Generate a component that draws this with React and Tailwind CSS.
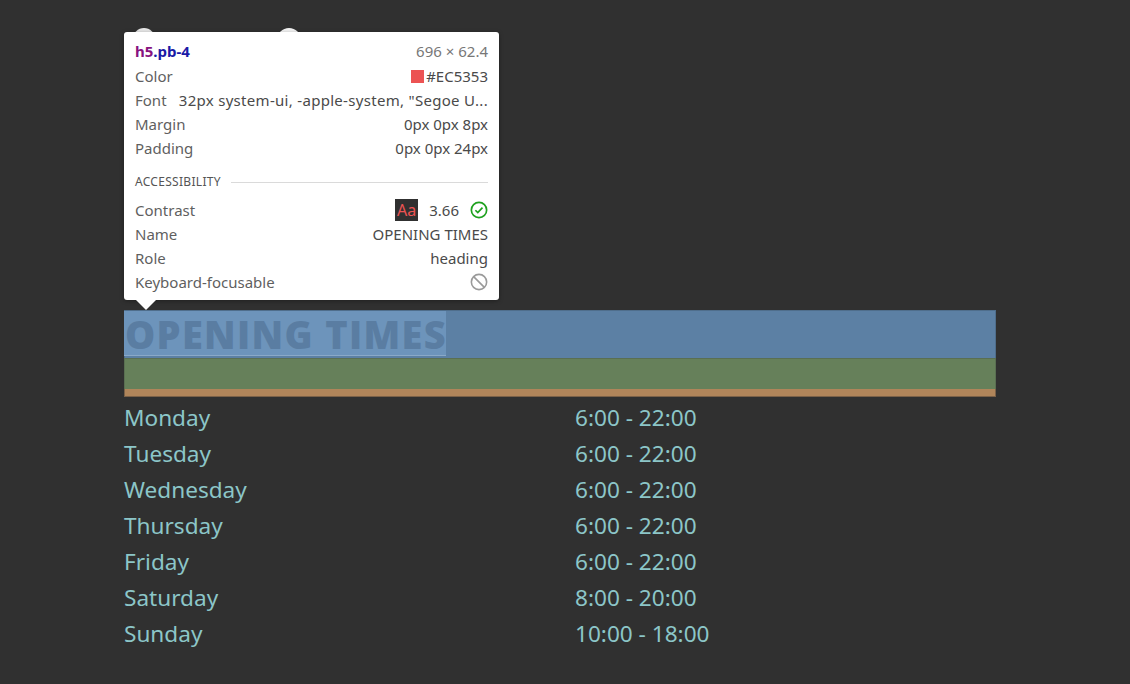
import React from 'react';

const hours = [
  ['Monday', '6:00 - 22:00'],
  ['Tuesday', '6:00 - 22:00'],
  ['Wednesday', '6:00 - 22:00'],
  ['Thursday', '6:00 - 22:00'],
  ['Friday', '6:00 - 22:00'],
  ['Saturday', '8:00 - 20:00'],
  ['Sunday', '10:00 - 18:00'],
];

function Row({ label, children, className = '' }) {
  return (
    <div className={`flex items-center justify-between h-[24px] ${className}`}>
      <span className="text-[#5f5f5f]">{label}</span>
      <span className="text-[#4a4a4a] flex items-center gap-2">{children}</span>
    </div>
  );
}

export default function App() {
  return (
    <div className="relative w-[1130px] h-[684px] overflow-hidden bg-[#303030] font-['Noto_Sans','Open_Sans',sans-serif]">
      {/* peeking avatars behind the tooltip */}
      <div className="absolute left-[133px] top-[28px] w-[22px] h-[22px] rounded-full bg-[#e8e8e8]" />
      <div className="absolute left-[277px] top-[28px] w-[24px] h-[24px] rounded-full bg-[#f4f4f4]" />

      {/* page content */}
      <div className="pt-[310px] pl-[124px]">
        <div className="w-[872px]">
          <div className="relative h-[48px] bg-[#5c80a4] border-x border-t border-[#4f6e8c]">
            <div className="absolute left-[-1px] top-0 h-[45px] w-[322px] bg-[#6d94bb] border-b border-[#8aa9c8]" />
            <h5 className="relative leading-[47px] text-[38px] font-extrabold tracking-[1.3px] text-[#5a7da2] font-['Open_Sans',sans-serif] whitespace-nowrap">
              OPENING TIMES
            </h5>
          </div>
          <div className="h-[31px] bg-[#66805a] border-x border-t border-[#5a6f52]" />
          <div className="h-[8px] bg-[#b0855a] border-x border-b border-[#7b6148]" />
        </div>

        <div className="mt-[3px] w-[872px] text-[22.6px] leading-[36px] text-[#8cc6c8]">
          {hours.map(([day, time]) => (
            <div key={day} className="grid grid-cols-[451px_1fr]">
              <span>{day}</span>
              <span>{time}</span>
            </div>
          ))}
        </div>
      </div>

      {/* devtools inspect tooltip */}
      <div className="absolute left-[124px] top-[32px] w-[375px] h-[268px] bg-white rounded-[3px] shadow-[0_1px_4px_rgba(0,0,0,0.35)] px-[11px] pt-[6px] text-[15px]">
        <div className="flex items-center justify-between h-[26px]">
          <span className="font-bold">
            <span className="text-[#881280]">h5</span>
            <span className="text-[#1a1aa6]">.pb-4</span>
          </span>
          <span className="text-[#777]">696 × 62.4</span>
        </div>
        <Row label="Color">
          <span className="flex items-center gap-[2px]">
            <span className="inline-block w-[13px] h-[13px] bg-[#ec5353]" />
            #EC5353
          </span>
        </Row>
        <Row label="Font">
          <span className="ml-[-200px] whitespace-nowrap tracking-[0.3px]">32px system-ui, -apple-system, "Segoe U...</span>
        </Row>
        <Row label="Margin">0px 0px 8px</Row>
        <Row label="Padding">0px 0px 24px</Row>

        <div className="flex items-center gap-[10px] mt-[10px] h-[24px]">
          <span className="text-[12px] text-[#555] tracking-[0.3px]">ACCESSIBILITY</span>
          <div className="flex-1 h-px bg-[#dadada]" />
        </div>
        <Row label="Contrast" className="mt-[4px]">
          <span className="flex items-center gap-[11px]">
            <span className="bg-[#303030] text-[#ec5353] px-[2px] h-[22px] leading-[22px] text-[16px]">Aa</span>
            <span>3.66</span>
            <svg width="18" height="18" viewBox="0 0 16 16" fill="none" stroke="#1ea11e" strokeWidth="1.5">
              <circle cx="8" cy="8" r="6.8" />
              <path d="M4.8 8.2l2.1 2.1 4.2-4.4" />
            </svg>
          </span>
        </Row>
        <Row label="Name" className="h-[23.5px]">OPENING TIMES</Row>
        <Row label="Role" className="h-[23.5px]">heading</Row>
        <Row label="Keyboard-focusable" className="h-[23.5px]">
          <svg width="18" height="18" viewBox="0 0 16 16" fill="none" stroke="#9a9a9a" strokeWidth="1.4">
            <circle cx="8" cy="8" r="6.8" />
            <path d="M3.2 3.2l9.6 9.6" />
          </svg>
        </Row>
      </div>
      {/* tooltip arrow */}
      <div className="absolute left-[135px] top-[299px] w-0 h-0 border-l-[11px] border-r-[11px] border-t-[11px] border-l-transparent border-r-transparent border-t-white" />
    </div>
  );
}
